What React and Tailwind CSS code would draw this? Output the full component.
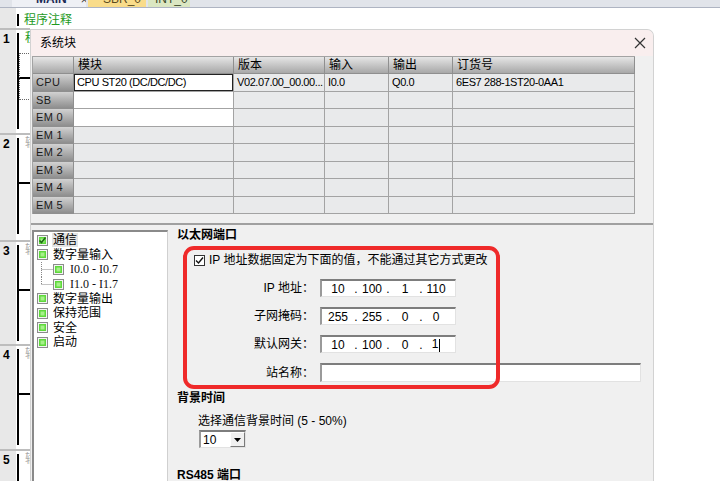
import React from 'react';

const COLS = 'grid grid-cols-[41px_160px_91px_64px_64px_182px]';

const rows = [
  { head: 'CPU', cells: ['CPU ST20 (DC/DC/DC)', 'V02.07.00_00.00...', 'I0.0', 'Q0.0', '6ES7 288-1ST20-0AA1'], white: 1 },
  { head: 'SB', cells: ['', '', '', '', ''], white: 1 },
  { head: 'EM 0', cells: ['', '', '', '', ''], white: 1 },
  { head: 'EM 1', cells: ['', '', '', '', ''] },
  { head: 'EM 2', cells: ['', '', '', '', ''] },
  { head: 'EM 3', cells: ['', '', '', '', ''] },
  { head: 'EM 4', cells: ['', '', '', '', ''] },
  { head: 'EM 5', cells: ['', '', '', '', ''] },
];

const networks = [
  { n: 1, h: 'h-[105px]', mark: '程', green: true },
  { n: 2, h: 'h-[107px]', mark: '输' },
  { n: 3, h: 'h-[104px]', mark: '输' },
  { n: 4, h: 'h-[105px]', mark: '输' },
  { n: 5, h: 'h-[60px]', mark: '输' },
];

const ip = [
  { label: 'IP 地址：', parts: ['10', '100', '1', '110'] },
  { label: '子网掩码：', parts: ['255', '255', '0', '0'] },
  { label: '默认网关：', parts: ['10', '100', '0', '1'], caret: true },
];

const tree = [
  { text: '通信', checked: true, selected: true },
  { text: '数字量输入' },
  { text: 'I0.0 - I0.7', sub: 'mid' },
  { text: 'I1.0 - I1.7', sub: 'last' },
  { text: '数字量输出' },
  { text: '保持范围' },
  { text: '安全' },
  { text: '启动' },
];

function GreenBox({ checked }) {
  return (
    <svg width="11" height="11" viewBox="0 0 11 11" className="shrink-0">
      <rect x="0.5" y="0.5" width="10" height="10" fill="#f4f4f4" stroke="#8c8c8c" />
      <rect x="2" y="2" width="7" height="7" fill="#5fd93c" />
      <rect x="3.5" y="3.5" width="4" height="4" fill="#a6f08a" />
      {checked && <polyline points="2.5,5.5 4.5,7.5 8.5,2.5" fill="none" stroke="#1d6b12" strokeWidth="1.6" />}
    </svg>
  );
}

function Network({ n, h, mark, green }) {
  return (
    <div className={`${h} flex`}>
      <div className="w-[16px] border-t-2 border-[#bdbdbd] bg-[#e8e8e8] pl-[3px] pt-[2px] text-[12px] font-bold leading-[14px] text-black">
        {n}
      </div>
      <div className="relative w-[14px] border-t-2 border-[#bdbdbd]">
        <svg width="14" height="100" className="block">
          <rect x="1" y="3" width="2" height="96" fill="#000" />
          <rect x="2" y="47" width="12" height="2" fill="#000" />
        </svg>
        <span className={`absolute left-[9px] top-[0px] text-[12px] leading-[16px] ${green ? 'text-[#1e9a1e]' : 'text-[#a8a8a8]'}`}>
          {mark}
        </span>
        {green && <div className="absolute left-[3px] top-[23px] w-[12px] h-[47px] border-t border-l border-b border-dotted border-[#666]" />}
      </div>
    </div>
  );
}

function IpField({ parts, caret }) {
  const w = ['w-[28px]', 'w-[24px]', 'w-[26px]', 'w-[24px]'];
  const dw = ['w-[8px]', 'w-[8px]', 'w-[6px]'];
  return (
    <div className="ml-[6px] w-[136px] h-[18px] bg-white border-t-2 border-l-2 border-t-[#7d7d7d] border-l-[#9a9a9a] border-r border-b border-r-[#e2e2e2] border-b-[#e2e2e2] flex items-center pl-[2px] text-[12px] leading-[14px]">
      {parts.map((p, i) => (
        <React.Fragment key={i}>
          <span className={`${w[i]} text-center`}>
            {p}
            {caret && i === 3 && <span className="inline-block w-px h-[13px] bg-black align-middle ml-px" />}
          </span>
          {i < 3 && <span className={`${dw[i]} text-center`}>.</span>}
        </React.Fragment>
      ))}
    </div>
  );
}

export default function App() {
  return (
    <div className="relative w-[720px] h-[481px] overflow-hidden bg-white text-black font-['Liberation_Sans','Noto_Sans_CJK_SC',sans-serif]">
      {/* tab strip */}
      <div className="h-[8px] flex bg-[#e1e4ea] border-b border-[#aeb4c2] overflow-hidden">
        <div className="ml-[12px] w-[74px] bg-[#eef0f5] flex items-start pl-[24px] overflow-hidden">
          <span className="mt-[-7px] text-[12px] leading-[12px] font-bold text-[#1c2a55]">MAIN</span>
          <span className="mt-[-6px] ml-[14px] text-[12px] leading-[12px] text-[#333]">×</span>
        </div>
        <div className="ml-[2px] w-[58px] bg-[#f9dc8a] pl-[15px] overflow-hidden">
          <span className="block mt-[-7px] text-[12px] leading-[12px] text-[#5a4a20]">SBR_0</span>
        </div>
        <div className="ml-[2px] w-[42px] bg-[#dbe7c2] pl-[7px] overflow-hidden">
          <span className="block mt-[-7px] text-[12px] leading-[12px] text-[#3c4a2a]">INT_0</span>
        </div>
      </div>

      {/* program comment */}
      <div className="h-[20px] flex">
        <div className="w-[16px] bg-[#e8e8e8]" />
        <div className="w-[2px] h-[12px] mt-[6px] ml-px bg-black" />
        <div className="pl-[5px] pt-[4px] text-[12px] leading-[16px] text-[#1e9a1e]">程序注释</div>
      </div>

      {networks.map((net) => (
        <Network key={net.n} {...net} />
      ))}

      {/* system block dialog */}
      <div className="absolute left-[30px] top-[29px] w-[624px] h-[452px] bg-[#f0f0f0] border-l border-r border-t border-[#d2d2d2] rounded-tr-[7px] flex flex-col overflow-hidden">
        <div className="h-[26px] shrink-0 bg-[#f9eeee] flex items-center justify-between pl-[9px] pr-[7px]">
          <span className="text-[12px] leading-[16px]">系统块</span>
          <svg width="12" height="12" viewBox="0 0 12 12">
            <path d="M1 1 L11 11 M11 1 L1 11" stroke="#333" strokeWidth="1.2" />
          </svg>
        </div>

        {/* module table */}
        <div className="ml-px w-[603px] border-l border-t border-[#a3a3a3] text-[11px]">
          <div className={`${COLS} h-[17px]`}>
            {['', '模块', '版本', '输入', '输出', '订货号'].map((t, i) => (
              <div key={i} className="border-r border-b border-[#8f8f8f] bg-gradient-to-b from-[#e6e6e6] to-[#a8a8a8] pl-[4px] text-[12px] leading-[16px]">
                {t}
              </div>
            ))}
          </div>
          {rows.map((r, ri) => (
            <div key={ri} className={`${COLS} h-[17.5px]`}>
              <div className="border-r border-b border-[#8f8f8f] bg-gradient-to-b from-[#d2d2d2] to-[#8e8e8e] pl-[3px] leading-[16px] text-[#1a1a1a] tracking-[0.3px]">
                {r.head}
              </div>
              {r.cells.map((c, ci) => (
                <div
                  key={ci}
                  className={`border-r border-b border-[#a3a3a3] pl-[3px] leading-[16px] whitespace-nowrap overflow-hidden tracking-[-0.4px] ${
                    ci === 0 && r.white ? 'bg-white' : 'bg-[#e9eaeb]'
                  } ${ci === 0 && ri === 0 ? 'shadow-[inset_-1px_-1px_0_0_#222,inset_1px_1px_0_0_#222]' : ''}`}
                >
                  {c}
                </div>
              ))}
            </div>
          ))}
        </div>

        <div className="h-[9px] shrink-0" />
        <div className="h-[2px] shrink-0 bg-[#a0a0a0]" />

        {/* lower pane */}
        <div className="flex-1 flex min-h-0">
          {/* tree */}
          <div className="ml-px mt-[5px] w-[136px] bg-white border-t-2 border-l-2 border-t-[#8a8a8a] border-l-[#8a8a8a] border-r border-r-[#d0d0d0] pt-[1px] pl-[3px] text-[12px]">
            {tree.map((t, i) => (
              <div key={i} className="h-[14.6px] flex items-center">
                {t.sub && (
                  <svg width="17" height="15" className="shrink-0 -ml-[1px]">
                    <line x1="5.5" y1="0" x2="5.5" y2={t.sub === 'mid' ? 15 : 7.5} stroke="#888" strokeDasharray="1 1" />
                    <line x1="5.5" y1="7.5" x2="17" y2="7.5" stroke="#888" strokeDasharray="1 1" />
                  </svg>
                )}
                <GreenBox checked={t.checked} />
                <span
                  className={`ml-[4px] px-[1px] leading-[14px] ${t.selected ? 'bg-[#e4e4e4]' : ''} ${
                    t.sub ? "ml-[5px] font-['Liberation_Serif',serif] text-[#111]" : ''
                  }`}
                >
                  {t.text}
                </span>
              </div>
            ))}
          </div>

          {/* settings */}
          <div className="flex-1 pl-[9px] text-[12px]">
            <div className="mt-[2px] h-[16px] leading-[16px] font-bold">以太网端口</div>
            <div className="mt-[9px] h-[16px] pl-[17px] flex items-center">
              <div className="w-[11px] h-[11px] bg-white border border-[#333] flex items-center justify-center">
                <svg width="9" height="9" viewBox="0 0 9 9">
                  <polyline points="1,4.5 3.5,7 8,1.5" fill="none" stroke="#111" strokeWidth="1.4" />
                </svg>
              </div>
              <span className="ml-[4px] leading-[16px]">IP 地址数据固定为下面的值，不能通过其它方式更改</span>
            </div>

            <div className="mt-[11px] flex flex-col gap-[10px]">
              {ip.map((row) => (
                <div key={row.label} className="flex items-center h-[18px]">
                  <div className="w-[137px] text-right leading-[16px]">{row.label}</div>
                  <IpField parts={row.parts} caret={row.caret} />
                </div>
              ))}
              <div className="flex items-center h-[19px]">
                <div className="w-[137px] text-right leading-[16px]">站名称：</div>
                <div className="ml-[6px] w-[321px] h-[19px] bg-white border-t-2 border-l-2 border-t-[#7d7d7d] border-l-[#9a9a9a] border-r border-b border-r-[#e2e2e2] border-b-[#e2e2e2]" />
              </div>
            </div>

            <div className="mt-[8px] h-[16px] leading-[16px] font-bold">背景时间</div>
            <div className="mt-[7px] h-[16px] pl-[21px] leading-[16px]">选择通信背景时间 (5 - 50%)</div>
            <div className="mt-[1px] ml-[22px] w-[47px] h-[18px] bg-white border-t-2 border-l-2 border-t-[#7d7d7d] border-l-[#9a9a9a] border-r border-b border-r-[#e2e2e2] border-b-[#e2e2e2] flex items-center">
              <span className="pl-[2px] flex-1 leading-[14px]">10</span>
              <div className="w-[15px] h-[15px] bg-[#f0f0f0] border-t border-l border-t-white border-l-white border-r border-b border-r-[#7a7a7a] border-b-[#7a7a7a] flex items-center justify-center">
                <svg width="7" height="4" viewBox="0 0 7 4">
                  <polygon points="0,0 7,0 3.5,4" fill="#000" />
                </svg>
              </div>
            </div>
            <div className="mt-[19px] h-[16px] leading-[16px] font-bold">RS485 端口</div>
          </div>
        </div>
      </div>

      {/* red annotation box */}
      <div className="absolute left-[183px] top-[246px] w-[317px] h-[143px] border-[4px] border-[#ef2a2a] rounded-[11px]" />
    </div>
  );
}
